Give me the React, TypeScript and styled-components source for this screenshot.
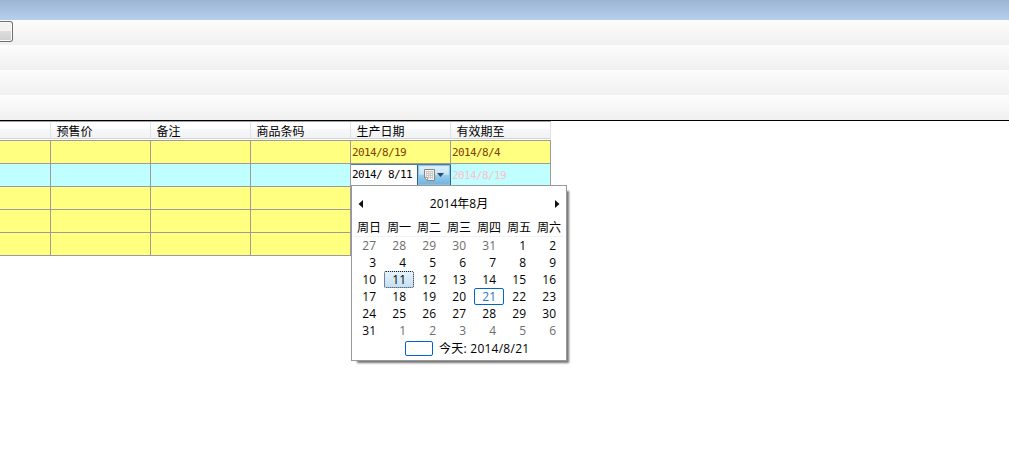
import React from "react";
import styled, { createGlobalStyle } from "styled-components";

const Global = createGlobalStyle`
  * { box-sizing: border-box; }
  html, body { margin: 0; background: #fff; overflow: hidden; }
  body { font-family: "Open Sans", "Noto Sans CJK SC", sans-serif; font-size: 12px; color: #000; }
`;

const Window = styled.div`
  display: flex;
  flex-direction: column;
  width: 1009px;
  height: 473px;
  overflow: hidden;
  background: #fff;
`;

const TitleBar = styled.div`
  flex: none;
  height: 20px;
  background: linear-gradient(#9ab5d2, #b7d0ec);
`;

const ToolStrip = styled.div`
  flex: none;
  height: 25px;
  background: linear-gradient(#fdfdfd, #f0f0f0);
`;

const ToolButton = styled.div`
  width: 13px;
  height: 21px;
  margin-top: 1px;
  border: 1px solid #707070;
  border-left: 0;
  border-radius: 0 3px 3px 0;
  box-shadow: inset -1px 0 0 #fbfbfb, inset 0 1px 0 #fbfbfb, inset 0 -1px 0 #fbfbfb;
  background: linear-gradient(#f2f2f2 0 48%, #dddddd 50%, #cfcfcf);
`;

const Grid = styled.div`
  display: flex;
  flex-direction: column;
  width: 551px;
`;

const TopRule = styled.div`
  flex: none;
  height: 1px;
  background: #000;
`;

const HeaderRow = styled.div`
  display: grid;
  grid-template-columns: 51px repeat(5, 100px);
  height: 19px;
  border-top: 1px solid #a0a0a0;
  border-bottom: 1px solid #fff;
`;

const HeaderCell = styled.div`
  height: 17px;
  padding-left: 5.5px;
  border-right: 1px solid #e2e3e5;
  border-bottom: 1px solid #d5d5d5;
  background: linear-gradient(#fff 0 40%, #f7f8fa 44%, #f1f2f4);
  font: 12px/18px "Noto Sans CJK SC", sans-serif;
  white-space: nowrap;
`;

const Row = styled.div<{ $first?: boolean; $selected?: boolean }>`
  display: grid;
  grid-template-columns: 51px repeat(5, 100px);
  height: ${(p) => (p.$first ? 24 : 23)}px;
  border-top: ${(p) => (p.$first ? "1px solid #a09aa0" : "0")};
  border-bottom: 1px solid #a09aa0;
  background: ${(p) => (p.$selected ? "#c0ffff" : "#ffff80")};
`;

const Cell = styled.div<{ $color?: string }>`
  position: relative;
  height: 22px;
  padding-left: 1px;
  border-right: 1px solid #a09aa0;
  color: ${(p) => p.$color || "#804000"};
  font: 11px/23px "DejaVu Sans Mono", monospace;
  letter-spacing: -0.62px;
  white-space: pre;
`;

const Picker = styled.div`
  display: flex;
  width: 100px;
  height: 22px;
  margin-left: -1px;
  background: #fff;
  border-top: 1px solid #4a7aa5;
  color: #000;
  line-height: 19px;
`;

const PickerText = styled.span`
  width: 66px;
  padding-left: 1px;
`;

const PickerButton = styled.span`
  display: flex;
  align-items: center;
  justify-content: center;
  width: 34px;
  height: 21px;
  border: 1px solid #2c628b;
  border-top: 0;
  box-shadow: inset 0 0 1px 1px #8cc0df;
  background: linear-gradient(#e2f3fc 0, #c6e5f6 46%, #98cdec 52%, #6cb2dc);
`;

const Calendar = styled.div`
  position: absolute;
  z-index: 2;
  left: 0;
  top: 21px;
  width: 216px;
  height: 176px;
  padding: 0 2px;
  border: 1px solid #989898;
  background: #fff;
  box-shadow: 4px 4px 2px -2px rgba(0, 0, 0, 0.55);
  font: 12px/17px "Open Sans", "Noto Sans CJK SC", sans-serif;
  letter-spacing: 0;
  color: #000;
`;

const CalendarHead = styled.div`
  display: flex;
  align-items: center;
  justify-content: space-between;
  height: 34px;
  padding: 1px 4px 0;
`;

const Week = styled.div<{ $names?: boolean }>`
  display: grid;
  grid-template-columns: repeat(7, 30px);
  height: 17px;
  ${(p) => p.$names && "border-bottom: 1px solid #f2f2f2; text-align: center; line-height: 16px;"}
`;

const Day = styled.span<{ $state?: string }>`
  height: 17px;
  padding-right: ${(p) => (p.$state === "today" || p.$state === "selected" ? 7 : 8)}px;
  text-align: right;
  color: ${(p) => (p.$state === "other" ? "#6d6d6d" : "#000")};
  ${(p) =>
    p.$state === "today" &&
    "line-height: 15px; border: 1px solid #0066cc; border-radius: 2px; color: #3273c8;"}
  ${(p) =>
    p.$state === "selected" &&
    "line-height: 15px; border: 1px dotted #102030; border-radius: 2px; background: linear-gradient(#e6f2fc, #c4def5);"}
`;

const TodayRow = styled.div`
  display: flex;
  align-items: center;
  height: 19px;
  padding-left: 51px;
  gap: 6px;
  letter-spacing: 0.25px;
`;

const TodayBox = styled.span`
  width: 28px;
  height: 15px;
  border: 1px solid #0066cc;
  border-radius: 2px;
`;

const headers = ["", "预售价", "备注", "商品条码", "生产日期", "有效期至"];
const weekdays = ["周日", "周一", "周二", "周三", "周四", "周五", "周六"];
const days = Array.from({ length: 42 }, (_, i) => {
  if (i < 5) return { n: 27 + i, state: "other" };
  if (i > 35) return { n: i - 35, state: "other" };
  const n = i - 4;
  return { n, state: n === 21 ? "today" : n === 11 ? "selected" : "normal" };
});

const Arrow = ({ right }: { right?: boolean }) => (
  <svg width="5" height="8" viewBox="0 0 5 8">
    <path d={right ? "M0 0L4.5 4L0 8Z" : "M5 0L0.5 4L5 8Z"} fill="#111" />
  </svg>
);

const CalendarIcon = () => (
  <svg width="22" height="14" viewBox="0 0 22 14">
    <path d="M1.5 1.5H11.5V12.5H4.5L1.5 9.5Z" fill="#f5f3f1" stroke="#8a827e" />
    <path d="M3 3.5H10M3 5.5H10M3 7.5H10M5 9.5H10M3.5 3V9M5.5 3V11M7.5 3V11M9.5 3V11" stroke="#c2c2c2" strokeWidth=".8" />
    <path d="M4.5 12.5V9.5H1.5Z" fill="#fff" stroke="#8a827e" strokeWidth=".7" />
    <path d="M14 5H21L17.5 9Z" fill="#26496e" />
  </svg>
);

const MonthCalendar = () => (
  <Calendar>
    <CalendarHead>
      <Arrow />
      <span>2014年8月</span>
      <Arrow right />
    </CalendarHead>
    <Week $names>
      {weekdays.map((d) => (
        <span key={d}>{d}</span>
      ))}
    </Week>
    {[0, 1, 2, 3, 4, 5].map((w) => (
      <Week key={w}>
        {days.slice(w * 7, w * 7 + 7).map((d, i) => (
          <Day key={i} $state={d.state}>
            {d.n}
          </Day>
        ))}
      </Week>
    ))}
    <TodayRow>
      <TodayBox />
      <span>今天: 2014/8/21</span>
    </TodayRow>
  </Calendar>
);

const EmptyCells = ({ count }: { count: number }) => (
  <>
    {Array.from({ length: count }, (_, i) => (
      <Cell key={i} />
    ))}
  </>
);

export default function App() {
  return (
    <Window>
      <Global />
      <TitleBar />
      <ToolStrip>
        <ToolButton />
      </ToolStrip>
      <ToolStrip />
      <ToolStrip />
      <ToolStrip />
      <TopRule />
      <Grid>
        <HeaderRow>
          {headers.map((h, i) => (
            <HeaderCell key={i}>{h}</HeaderCell>
          ))}
        </HeaderRow>
        <Row $first>
          <EmptyCells count={4} />
          <Cell>2014/8/19</Cell>
          <Cell>2014/8/4</Cell>
        </Row>
        <Row $selected>
          <EmptyCells count={4} />
          <Cell>
            <Picker>
              <PickerText>2014/ 8/11</PickerText>
              <PickerButton>
                <CalendarIcon />
              </PickerButton>
            </Picker>
            <MonthCalendar />
          </Cell>
          <Cell $color="#ffc0cb">2014/8/19</Cell>
        </Row>
        {[0, 1, 2].map((r) => (
          <Row key={r}>
            <EmptyCells count={6} />
          </Row>
        ))}
      </Grid>
    </Window>
  );
}
